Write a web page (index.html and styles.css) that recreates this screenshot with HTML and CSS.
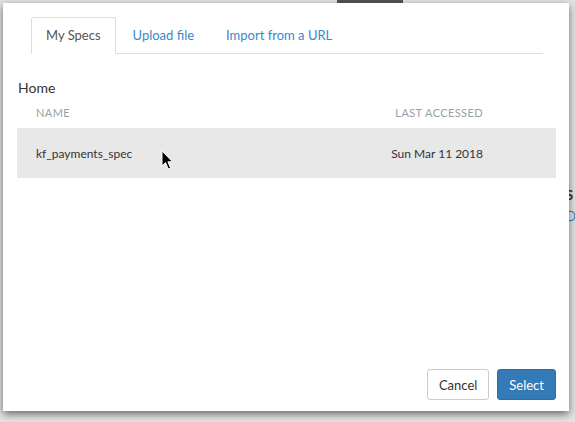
FILE: index.html
```html
<!DOCTYPE html>
<html>
<head>
<meta charset="utf-8">
<link rel="stylesheet" href="styles.css">
</head>
<body>
<div class="page-bar"></div>
<div class="page-behind">
  <div class="behind-title">S</div>
  <div class="behind-link">D</div>
</div>
<div class="modal">
  <div class="tabs">
    <div class="tab active">My Specs</div>
    <div class="tab">Upload file</div>
    <div class="tab">Import from a URL</div>
  </div>
  <div class="crumb">Home</div>
  <div class="table">
    <div class="thead">
      <div class="col-name">Name</div>
      <div class="col-date">Last accessed</div>
    </div>
    <div class="row">
      <div class="col-name">kf_payments_spec</div>
      <div class="col-date">Sun Mar 11 2018</div>
      <svg class="cursor" width="14" height="21" viewBox="0 0 14 21">
        <path d="M1 1 L1 16 L4.5 12.6 L7.3 19 L9.6 18 L6.9 11.8 L11.6 11.8 Z" fill="#000" stroke="#fff" stroke-width="1" stroke-linejoin="round"/>
      </svg>
    </div>
  </div>
  <div class="footer">
    <button class="btn btn-default">Cancel</button>
    <button class="btn btn-primary">Select</button>
  </div>
</div>
</body>
</html>
```
FILE: styles.css
```css
html, body {
  margin: 0;
  padding: 0;
}
body {
  width: 575px;
  height: 422px;
  overflow: hidden;
  background: #e4e4e4;
  font-family: Lato, "Open Sans", sans-serif;
  color: #333;
  position: relative;
  padding-top: 3px;
  box-sizing: border-box;
}
.page-bar {
  position: absolute;
  left: 337px;
  top: 0;
  width: 66px;
  height: 3px;
  background: #555;
}
.page-behind {
  position: absolute;
  left: 566px;
  top: 185px;
  font-size: 13px;
  line-height: 21px;
}
.behind-title { color: #333; font-weight: bold; }
.behind-link { color: #3b87c8; }
.modal {
  position: relative;
  z-index: 1;
  margin-left: 3px;
  width: 566px;
  height: 408px;
  background: #fff;
  box-shadow: 0 3px 8px rgba(0, 0, 0, 0.55);
  box-sizing: border-box;
  padding: 14px 13px 11px 14px;
  display: flex;
  flex-direction: column;
}
.tabs {
  display: flex;
  margin: 0 13px 0 14px;
  border-bottom: 1px solid #ddd;
}
.tab {
  padding: 0 14px;
  height: 35px;
  line-height: 34px;
  font-size: 13px;
  color: #3b87c8;
  margin-right: 2px;
  margin-bottom: -1px;
  border: 1px solid transparent;
  border-radius: 3px 3px 0 0;
}
.tab.active {
  color: #555;
  border-color: #ddd;
  border-bottom-color: #fff;
  background: #fff;
}
.crumb {
  margin-top: 24px;
  font-size: 14px;
  line-height: 20px;
  padding-left: 1px;
}
.table {
  margin-top: 6px;
}
.thead, .row {
  display: flex;
  align-items: center;
  padding: 0 73px 0 19px;
}
.thead {
  height: 16px;
  font-size: 11px;
  letter-spacing: 0.4px;
  text-transform: uppercase;
  color: #9a9fa5;
  margin-bottom: 8px;
}
.row {
  position: relative;
  height: 50px;
  background: #e8e8e8;
  font-size: 12px;
  color: #333;
}
.col-name {
  flex: 1;
}
.col-date {
  text-align: right;
}
.cursor {
  position: absolute;
  left: 144px;
  top: 22px;
}
.footer {
  margin-top: auto;
  display: flex;
  justify-content: flex-end;
  gap: 8px;
}
.btn {
  font-family: Lato, "Open Sans", sans-serif;
  font-size: 13px;
  height: 31px;
  padding: 0 11px;
  border-radius: 3px;
  border: 1px solid #ccc;
  background: #fff;
  color: #333;
}
.btn-primary {
  background: #337ab7;
  border-color: #2e6da4;
  color: #fff;
}
```
